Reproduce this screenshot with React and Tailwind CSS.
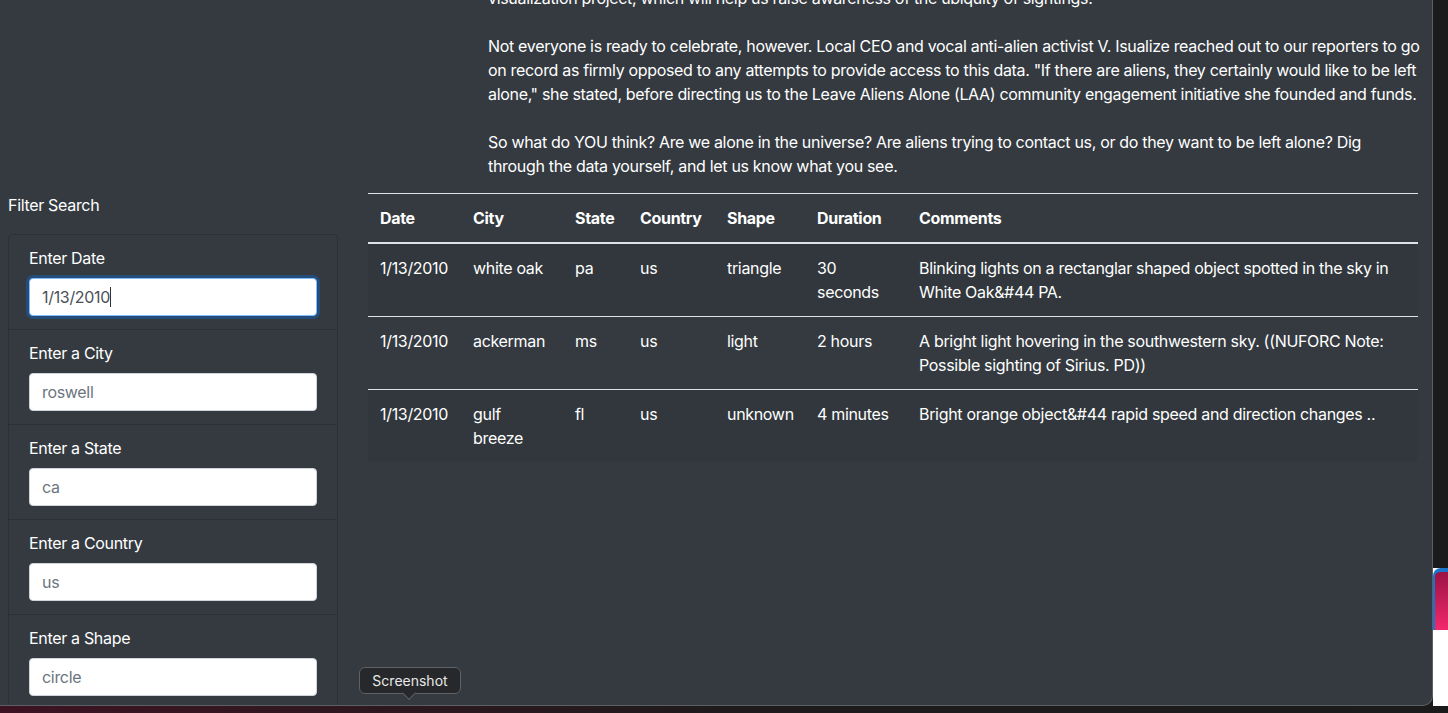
import React from 'react';

const rows = [
  {
    date: '1/13/2010',
    city: 'white oak',
    state: 'pa',
    country: 'us',
    shape: 'triangle',
    duration: '30 seconds',
    comments: ['Blinking lights on a rectanglar shaped object spotted in the sky in', 'White Oak&#44 PA.'],
  },
  {
    date: '1/13/2010',
    city: 'ackerman',
    state: 'ms',
    country: 'us',
    shape: 'light',
    duration: '2 hours',
    comments: ['A bright light hovering in the southwestern sky. ((NUFORC Note:', 'Possible sighting of Sirius. PD))'],
  },
  {
    date: '1/13/2010',
    city: 'gulf breeze',
    state: 'fl',
    country: 'us',
    shape: 'unknown',
    duration: '4 minutes',
    comments: ['Bright orange object&#44 rapid speed and direction changes ..'],
  },
];

const filters = [
  { label: 'Enter Date', value: '1/13/2010', focused: true },
  { label: 'Enter a City', placeholder: 'roswell' },
  { label: 'Enter a State', placeholder: 'ca' },
  { label: 'Enter a Country', placeholder: 'us' },
  { label: 'Enter a Shape', placeholder: 'circle' },
];

const lines = (arr) =>
  arr.map((l, i) => (
    <span key={i} className="block whitespace-nowrap">
      {l}
    </span>
  ));

function FilterItem({ item, last }) {
  return (
    <li className={`px-5 pt-[11px] pb-[13px] ${last ? '' : 'border-b border-black/15'}`}>
      <label className="block text-base leading-6 text-white mb-2">{item.label}</label>
      {item.focused ? (
        <div className="h-[38px] rounded border border-[#80bdff] bg-white px-3 flex items-center text-base text-[#495057] shadow-[0_0_0_3px_rgba(0,123,255,0.3)]">
          {item.value}
          <span className="inline-block w-px h-[20px] bg-[#333]" />
        </div>
      ) : (
        <div className="h-[38px] rounded border border-[#ced4da] bg-white px-3 flex items-center text-base text-[#6c757d]">
          {item.placeholder}
        </div>
      )}
    </li>
  );
}

export default function App() {
  return (
    <div
      className="w-[1448px] h-[713px] overflow-hidden bg-[#1b1b1b] flex flex-col tracking-[-0.32px]"
      style={{ fontFamily: 'Inter, "Noto Sans", sans-serif' }}
    >
      <div className="flex h-[706px]">
        {/* browser window */}
        <div className="relative w-[1433px] h-[706px] overflow-hidden bg-[#343a40] border-r border-b border-[#5b6066] rounded-br-[10px] text-white">
          <div className="grid grid-cols-[368px_1050px] -mt-[14px]">
            {/* top-left empty */}
            <div />
            <div className="pl-[120px] text-base leading-6 text-white">
              {lines(['visualization project, which will help us raise awareness of the ubiquity of sightings.'])}
              <div className="h-6" />
              {lines([
                'Not everyone is ready to celebrate, however. Local CEO and vocal anti-alien activist V. Isualize reached out to our reporters to go',
                'on record as firmly opposed to any attempts to provide access to this data. "If there are aliens, they certainly would like to be left',
                'alone," she stated, before directing us to the Leave Aliens Alone (LAA) community engagement initiative she founded and funds.',
              ])}
              <div className="h-6" />
              {lines([
                'So what do YOU think? Are we alone in the universe? Are aliens trying to contact us, or do they want to be left alone? Dig',
                'through the data yourself, and let us know what you see.',
              ])}
            </div>

            {/* filters */}
            <div className="pl-2 pr-[30px] pt-[15px]">
              <div className="text-base leading-6 text-white">Filter Search</div>
              <ul className="mt-[17px] rounded border border-black/15">
                {filters.map((f, i) => (
                  <FilterItem key={f.label} item={f} last={i === filters.length - 1} />
                ))}
              </ul>
            </div>

            {/* table */}
            <div className="pt-[15px]">
              <table className="w-[1050px] table-fixed text-base leading-6 text-white border-collapse">
                <colgroup>
                  <col className="w-[93px]" />
                  <col className="w-[102px]" />
                  <col className="w-[65px]" />
                  <col className="w-[87px]" />
                  <col className="w-[90px]" />
                  <col className="w-[102px]" />
                  <col />
                </colgroup>
                <thead>
                  <tr className="border-t border-[#dee2e6] border-b-2">
                    {['Date', 'City', 'State', 'Country', 'Shape', 'Duration', 'Comments'].map((h) => (
                      <th key={h} className="p-3 text-left font-bold align-bottom">
                        {h}
                      </th>
                    ))}
                  </tr>
                </thead>
                <tbody>
                  {rows.map((r, i) => (
                    <tr key={i} className={`border-t border-[#dee2e6] ${i % 2 === 0 ? 'bg-black/5' : ''}`}>
                      <td className="p-3 align-top">{r.date}</td>
                      <td className="p-3 align-top">{r.city}</td>
                      <td className="p-3 align-top">{r.state}</td>
                      <td className="p-3 align-top">{r.country}</td>
                      <td className="p-3 align-top">{r.shape}</td>
                      <td className="p-3 align-top">{r.duration}</td>
                      <td className="p-3 align-top h-[72px]">{lines(r.comments)}</td>
                    </tr>
                  ))}
                </tbody>
              </table>
            </div>
          </div>

          {/* screenshot tooltip */}
          <div className="absolute left-[359px] top-[667px] tracking-normal">
            <div className="h-[27px] w-[102px] rounded-md border border-[#5e6166] bg-[#26282b] flex items-center justify-center text-[14px] text-[#e8e8e8]">
              Screenshot
            </div>
            <div className="absolute left-[45px] top-[21px] w-[10px] h-[10px] rotate-45 bg-[#26282b] border-r border-b border-[#5e6166]" />
          </div>
        </div>

        {/* desktop strip on the right */}
        <div className="flex-1 flex flex-col bg-white">
          <div className="h-[568px] bg-[#1b1b1b]" />
          <div className="h-[62px] rounded-tl-[8px] border-t-[4px] border-l-[2px] border-[#1a74c9] bg-gradient-to-b from-[#9c1244] to-[#f3296c]" />
          <div className="flex-1 bg-white" />
        </div>
      </div>
      <div className="h-[7px] bg-gradient-to-r from-[#3d1222] via-[#1e1a1c] to-[#1b1b1b]" />
    </div>
  );
}
